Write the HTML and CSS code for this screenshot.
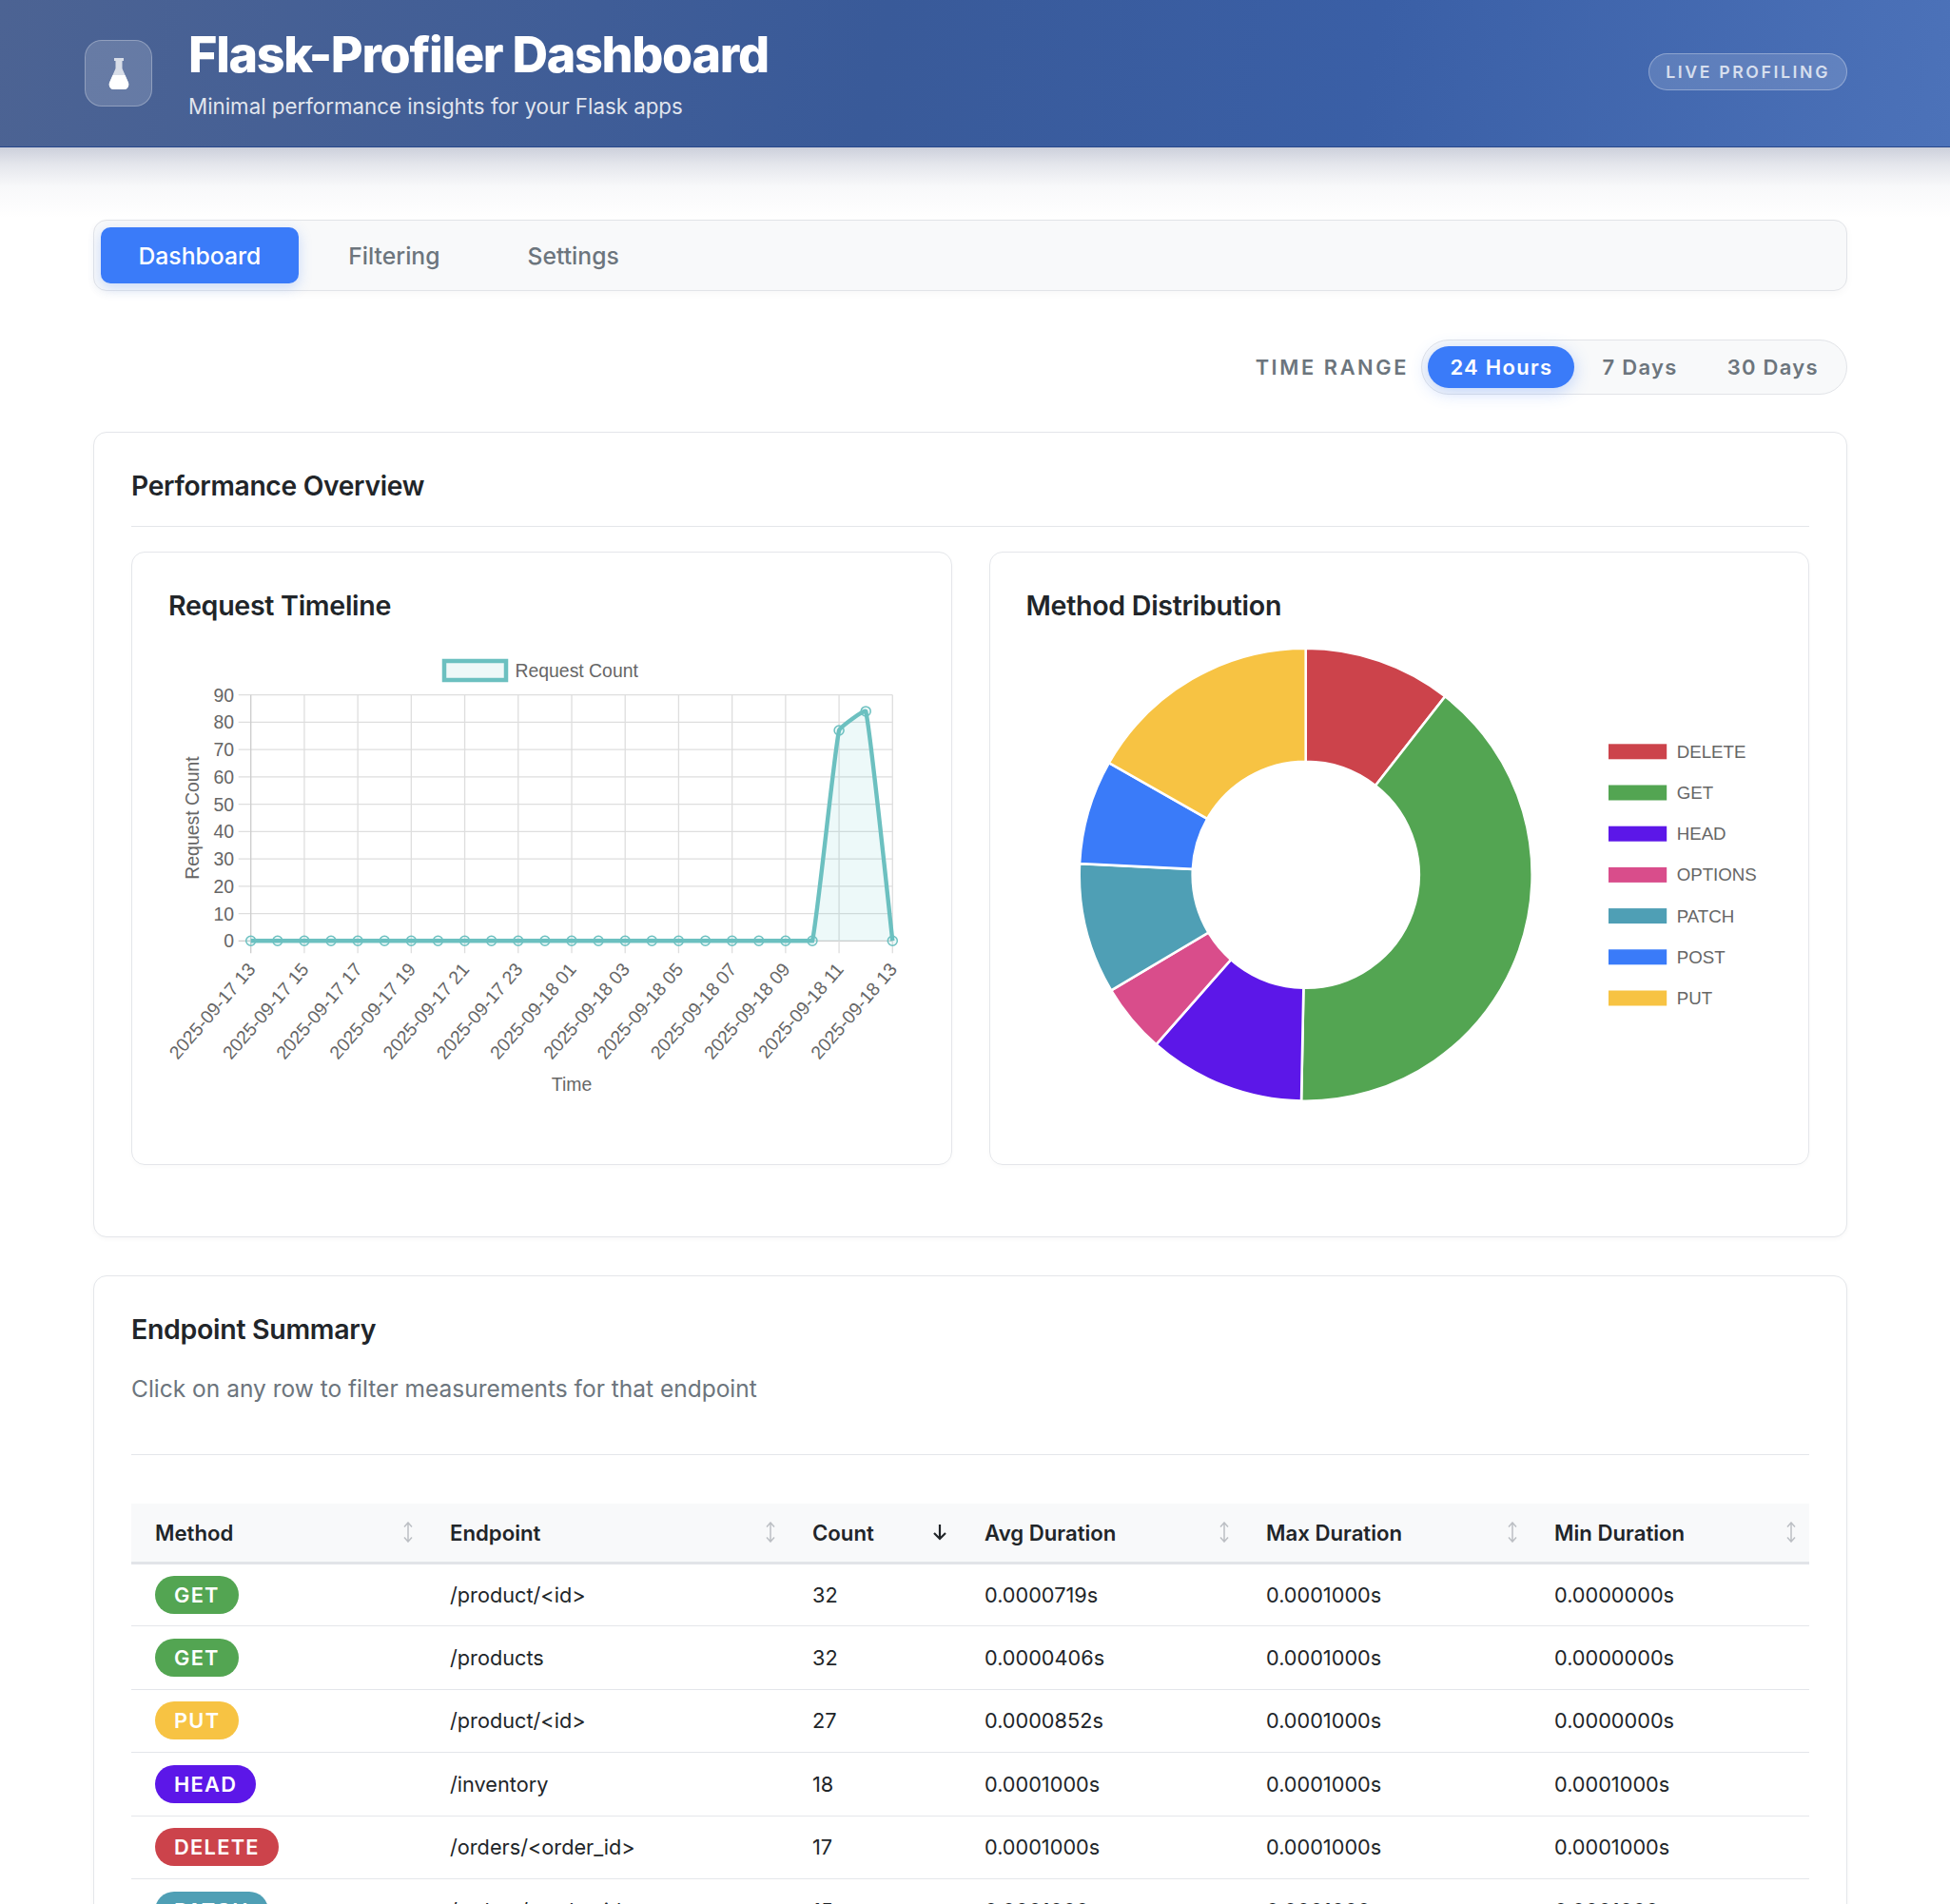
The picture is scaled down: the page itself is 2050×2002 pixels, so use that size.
FILE: index.html
```html
<!DOCTYPE html>
<html lang="en">
<head>
  <meta charset="UTF-8" />
  <title>Flask-Profiler Dashboard</title>
  <link rel="stylesheet" href="styles.css">
</head>
<body>
  <svg class="sprites" width="0" height="0">
    <symbol id="sortBoth" viewBox="0 0 12 22">
      <path d="M6 1v20M2 5.5 6 1l4 4.5M2 16.500 6 21l4-4.500" fill="none" stroke="currentColor" stroke-width="1.5"/>
    </symbol>
    <symbol id="sortDown" viewBox="0 0 14 18">
      <path d="M7 1v15M1 10 7 16l6-6" fill="none" stroke="currentColor" stroke-width="2.2"/>
    </symbol>
  </svg>

  <header class="topbar">
    <div class="brand">
      <div class="brand-icon">
        <svg width="22" height="33" viewBox="0 0 22 33">
          <path d="M6 0h10v3h-1.500v8L21 26c1 3.500-1 7-4.500 7h-11C2 33 0 29.500 1 26l6.500-15V3H6z" fill="#fff" fill-opacity=".75"/>
          <path d="M4.500 18h13L21 26c1 3.500-1 7-4.500 7h-11C2 33 0 29.500 1 26z" fill="#fff"/>
        </svg>
      </div>
      <div>
        <h1>Flask-Profiler Dashboard</h1>
        <p class="tagline">Minimal performance insights for your Flask apps</p>
      </div>
    </div>
    <span class="live-badge">LIVE PROFILING</span>
  </header>

  <main class="content">
    <nav class="tabs">
      <a class="tab active">Dashboard</a>
      <a class="tab">Filtering</a>
      <a class="tab">Settings</a>
    </nav>

    <div class="time-range">
      <span class="time-label">TIME RANGE</span>
      <div class="range-group">
        <button class="range-btn active">24 Hours</button>
        <button class="range-btn">7 Days</button>
        <button class="range-btn">30 Days</button>
      </div>
    </div>

    <section class="card overview">
      <div class="card-head">
        <h2>Performance Overview</h2>
      </div>
      <div class="chart-grid">
        <div class="chart-card">
          <h3>Request Timeline</h3>
          <svg id="timelineChart" class="chart" width="780" height="500" viewBox="0 0 780 500"></svg>
        </div>
        <div class="chart-card">
          <h3>Method Distribution</h3>
          <svg id="methodChart" class="chart" width="780" height="500" viewBox="0 0 780 500"></svg>
        </div>
      </div>
    </section>

    <section class="card">
      <div class="card-head summary-head">
        <h2>Endpoint Summary</h2>
        <p class="hint">Click on any row to filter measurements for that endpoint</p>
      </div>
      <table class="summary">
        <colgroup>
          <col class="col-method"><col class="col-endpoint"><col class="col-count">
          <col class="col-avg"><col class="col-max"><col class="col-min">
        </colgroup>
        <thead>
          <tr>
            <th><div class="th-inner">Method <svg class="sort"><use href="#sortBoth"/></svg></div></th>
            <th><div class="th-inner">Endpoint <svg class="sort"><use href="#sortBoth"/></svg></div></th>
            <th><div class="th-inner">Count <svg class="sort current"><use href="#sortDown"/></svg></div></th>
            <th><div class="th-inner">Avg Duration <svg class="sort"><use href="#sortBoth"/></svg></div></th>
            <th><div class="th-inner">Max Duration <svg class="sort"><use href="#sortBoth"/></svg></div></th>
            <th><div class="th-inner">Min Duration <svg class="sort"><use href="#sortBoth"/></svg></div></th>
          </tr>
        </thead>
        <tbody>
          <tr>
            <td><span class="method get">GET</span></td>
            <td>/product/&lt;id&gt;</td><td>32</td><td>0.0000719s</td><td>0.0001000s</td><td>0.0000000s</td>
          </tr>
          <tr>
            <td><span class="method get">GET</span></td>
            <td>/products</td><td>32</td><td>0.0000406s</td><td>0.0001000s</td><td>0.0000000s</td>
          </tr>
          <tr>
            <td><span class="method put">PUT</span></td>
            <td>/product/&lt;id&gt;</td><td>27</td><td>0.0000852s</td><td>0.0001000s</td><td>0.0000000s</td>
          </tr>
          <tr>
            <td><span class="method head">HEAD</span></td>
            <td>/inventory</td><td>18</td><td>0.0001000s</td><td>0.0001000s</td><td>0.0001000s</td>
          </tr>
          <tr>
            <td><span class="method delete">DELETE</span></td>
            <td>/orders/&lt;order_id&gt;</td><td>17</td><td>0.0001000s</td><td>0.0001000s</td><td>0.0001000s</td>
          </tr>
          <tr>
            <td><span class="method patch">PATCH</span></td>
            <td>/orders/&lt;order_id&gt;</td><td>15</td><td>0.0001000s</td><td>0.0001000s</td><td>0.0001000s</td>
          </tr>
        </tbody>
      </table>
    </section>
  </main>

  <script src="charts.js"></script>
</body>
</html>
```

FILE: styles.css
```css
* {
  box-sizing: border-box;
}
html, body {
  height: 2002px;
  overflow: hidden;
}
body {
  margin: 0;
  background-color: #fff;
  color: #212529;
  font-family: Inter, 'Noto Sans', sans-serif;
  font-size: 21.7px;
}
.sprites {
  position: absolute;
}

.topbar {
  position: relative;
  display: flex;
  align-items: center;
  justify-content: space-between;
  height: 155px;
  padding: 0 108px 0 89px;
  background: linear-gradient(100deg, #4c6393 0%, #395a99 45%, #3a5fa6 70%, #4c72b9 100%);
  border-bottom: 1px solid #2b4f98;
}
/* soft band under the header */
.topbar::after {
  content: "";
  position: absolute;
  top: 100%;
  left: 0;
  right: 0;
  height: 76px;
  background: linear-gradient(rgba(30, 45, 95, 0.23) 0, rgba(30, 45, 95, 0.12) 18px, rgba(30, 45, 95, 0.03) 42px, transparent 100%);
}
.brand {
  display: flex;
  align-items: center;
  gap: 38px;
}
.brand-icon {
  display: flex;
  align-items: center;
  justify-content: center;
  width: 71px;
  height: 70px;
  background-color: rgba(255, 255, 255, 0.16);
  border: 1px solid rgba(255, 255, 255, 0.28);
  border-radius: 18px;
}
h1 {
  margin: 1px 0 0;
  color: #fff;
  font-size: 52px;
  font-weight: 800;
  line-height: 62px;
  letter-spacing: -1.3px;
}
.tagline {
  margin: 7px 0 0;
  color: rgba(255, 255, 255, 0.85);
  font-size: 22.3px;
  line-height: 32px;
}
.live-badge {
  height: 39px;
  margin-bottom: 3px;
  padding: 0 17px;
  line-height: 37px;
  color: rgba(255, 255, 255, 0.75);
  background-color: rgba(255, 255, 255, 0.14);
  border: 1.3px solid rgba(255, 255, 255, 0.3);
  border-radius: 20px;
  font-size: 17.7px;
  font-weight: 600;
  letter-spacing: 2.6px;
}

.content {
  position: relative;
  z-index: 1;
  padding: 76px 108px 0 98px;
}
.tabs {
  display: flex;
  gap: 13px;
  height: 75px;
  padding: 7px;
  background-color: #f8f9fa;
  border: 1.3px solid #e2e4e8;
  border-radius: 14px;
  box-shadow: 0 3px 8px rgba(0, 0, 0, 0.03);
}
.tab {
  display: flex;
  align-items: center;
  padding: 0 39.5px;
  color: #6c757d;
  border-radius: 10px;
  font-size: 24.7px;
  font-weight: 500;
}
.tab.active {
  color: #fff;
  background-color: #3a7bf9;
  box-shadow: 0 4px 14px rgba(58, 123, 249, 0.25);
}

.time-range {
  display: flex;
  align-items: center;
  justify-content: flex-end;
  gap: 13.4px;
  margin-top: 51px;
}
.time-label {
  color: #6c757d;
  font-size: 21.8px;
  font-weight: 600;
  letter-spacing: 2.6px;
}
.range-group {
  display: flex;
  gap: 6px;
  height: 58px;
  padding: 6px;
  background-color: #f8f9fa;
  border: 1.3px solid #e2e4e8;
  border-radius: 29px;
}
.range-btn {
  padding: 0 23px;
  color: #6c757d;
  background: none;
  border: none;
  border-radius: 22px;
  font-family: inherit;
  font-size: 22px;
  font-weight: 600;
  letter-spacing: 1.3px;
}
.range-btn.active {
  color: #fff;
  background-color: #3a7bf9;
  box-shadow: 0 4px 18px rgba(58, 123, 249, 0.3);
}

.card {
  margin-top: 40px;
  padding: 39px;
  background-color: #fff;
  border: 1.3px solid #e4e6ea;
  border-radius: 14px;
  box-shadow: 0 2px 5px rgba(0, 0, 0, 0.03);
}
.overview {
  height: 847px;
  margin-top: 39px;
}
.card-head {
  padding-bottom: 25px;
  border-bottom: 1.3px solid #e4e6ea;
}
h2, h3 {
  margin: 0;
  font-weight: 600;
  line-height: 34px;
  letter-spacing: -0.3px;
}
h2 {
  font-size: 28.2px;
}
h3 {
  font-size: 28.6px;
}
.summary-head {
  padding-bottom: 53px;
}
.summary-head h2 {
  font-size: 28.5px;
}
.hint {
  margin: 29px 0 0;
  color: #6c757d;
  font-size: 24.5px;
  line-height: 32px;
}

.chart-grid {
  display: grid;
  grid-template-columns: 1fr 1fr;
  gap: 39px;
  margin-top: 26px;
}
.chart-card {
  height: 645px;
  padding: 39px 38px;
  border: 1.3px solid #e4e6ea;
  border-radius: 14px;
  box-shadow: 0 2px 5px rgba(0, 0, 0, 0.02);
}
.chart-card h3 {
  margin-bottom: 15.5px;
}
.chart {
  display: block;
  margin-left: -1px;
  overflow: visible;
  font-family: 'Liberation Sans', Arial, sans-serif;
}

.summary {
  width: 100%;
  margin-top: 51px;
  border-collapse: collapse;
  table-layout: fixed;
}
.col-method { width: 310px; }
.col-endpoint { width: 381px; }
.col-count { width: 181px; }
.col-avg { width: 296px; }
.col-max { width: 303px; }
.summary th {
  height: 62px;
  padding: 0 13px 0 25px;
  text-align: left;
  font-size: 22.2px;
  font-weight: 600;
  background-color: #f8f9fa;
  border-bottom: 3px solid #e2e4e8;
}
.th-inner {
  display: flex;
  align-items: center;
  justify-content: space-between;
}
.sort {
  width: 12px;
  height: 22px;
  color: #bcbfc4;
}
.sort.current {
  width: 14px;
  height: 18px;
  margin-right: 2px;
  color: #212529;
}
.summary td {
  height: 66.5px;
  padding: 0 25px;
  border-bottom: 1.3px solid #e4e6ea;
}
.method {
  display: inline-block;
  height: 40px;
  padding: 0 20px;
  color: #fff;
  border-radius: 20px;
  font-size: 21.8px;
  font-weight: 600;
  line-height: 40px;
  letter-spacing: 1.3px;
  vertical-align: middle;
}
.method.get { background-color: #53a552; }
.method.put { background-color: #f7c343; }
.method.head { background-color: #5c17e8; }
.method.delete { background-color: #cc434b; }
.method.patch { background-color: #4f9fb5; }
```

FILE: charts.js
```js
// plot area of the timeline, in svg units
const plot = { left: 87.7, right: 762.3, top: 60.7, bottom: 319.3 };
const lineColor = "#6cc0c0";
const fillColor = "rgba(75,192,192,0.1)";
const gridColor = "#dedede";
const textColor = "#666";
const fontSize = 19.4;

const counts = new Array(25).fill(0);
counts[22] = 77;
counts[23] = 84;

const methods = [
  ["DELETE", 17, "#cc434b"],
  ["GET", 64, "#53a552"],
  ["HEAD", 18, "#5c17e8"],
  ["OPTIONS", 8, "#d94d8b"],
  ["PATCH", 15, "#4f9fb5"],
  ["POST", 12, "#3a7bf9"],
  ["PUT", 27, "#f7c343"]
];

function label(x, y, str, extra = "") {
  return `<text x="${x}" y="${y}" font-size="${fontSize}" fill="${textColor}" dominant-baseline="central" ${extra}>${str}</text>`;
}

function hourLabel(i) {
  const day = i < 11 ? 17 : 18;
  const hour = (13 + i) % 24;
  return `2025-09-${day} ${String(hour).padStart(2, "0")}`;
}

function linePath(points) {
  const tension = 0.1;
  let d = `M${points[0].x} ${points[0].y}`;
  const control = i => {
    const cur = points[i];
    const prev = points[i - 1] || cur;
    const next = points[i + 1] || cur;
    const d01 = Math.hypot(cur.x - prev.x, cur.y - prev.y);
    const d12 = Math.hypot(next.x - cur.x, next.y - cur.y);
    const fa = tension * d01 / (d01 + d12);
    const fb = tension * d12 / (d01 + d12);
    return {
      inX: cur.x - fa * (next.x - prev.x),
      inY: Math.min(cur.y - fa * (next.y - prev.y), plot.bottom),
      outX: cur.x + fb * (next.x - prev.x),
      outY: Math.min(cur.y + fb * (next.y - prev.y), plot.bottom)
    };
  };
  for (let i = 1; i < points.length; i++) {
    const a = control(i - 1);
    const b = control(i);
    d += `C${a.outX} ${a.outY} ${b.inX} ${b.inY} ${points[i].x} ${points[i].y}`;
  }
  return d;
}

function drawTimeline() {
  const stepX = (plot.right - plot.left) / 24;
  const stepY = (plot.bottom - plot.top) / 9;
  let html = "";

  // legend
  html += `<rect x="291" y="25" width="65" height="20" fill="#eff8f8" stroke="${lineColor}" stroke-width="4.5"/>`;
  html += label(365.5, 35, "Request Count");

  // grid and y ticks
  for (let v = 0; v <= 9; v++) {
    const y = plot.bottom - v * stepY;
    const color = v === 0 ? "#ccc" : gridColor;
    html += `<path d="M${plot.left - 13} ${y}H${plot.right}" stroke="${color}" stroke-width="1.3"/>`;
    html += label(70, y, v * 10, 'text-anchor="end"');
  }

  // grid and x ticks, one label every two hours
  for (let i = 0; i <= 24; i += 2) {
    const x = plot.left + i * stepX;
    const color = i === 0 ? "#ccc" : gridColor;
    html += `<path d="M${x} ${plot.top}V${plot.bottom + 13}" stroke="${color}" stroke-width="1.3"/>`;
    html += label(0, 0, hourLabel(i), `text-anchor="end" transform="translate(${x + 0.5} ${plot.bottom + 26}) rotate(-49)"`);
  }

  // axis titles
  html += label(0, 0, "Request Count", `text-anchor="middle" transform="translate(25.7 ${(plot.top + plot.bottom) / 2}) rotate(-90)"`);
  html += label((plot.left + plot.right) / 2, 470, "Time", 'text-anchor="middle"');

  // data
  const points = counts.map((c, i) => ({
    x: plot.left + i * stepX,
    y: plot.bottom - c / 10 * stepY
  }));
  const d = linePath(points);
  html += `<path d="${d}V${plot.bottom}H${plot.left}Z" fill="${fillColor}"/>`;
  html += `<path d="${d}" fill="none" stroke="${lineColor}" stroke-width="4.4"/>`;
  points.forEach(p => {
    html += `<circle cx="${p.x}" cy="${p.y}" r="5" fill="${fillColor}" stroke="${lineColor}" stroke-width="1.5"/>`;
  });

  document.getElementById("timelineChart").innerHTML = html;
}

function drawMethods() {
  const cx = 294.7;
  const cy = 249.7;
  const outer = 238;
  const inner = 119;
  const total = methods.reduce((sum, m) => sum + m[1], 0);
  const polar = (r, a) => `${cx + r * Math.sin(a)} ${cy - r * Math.cos(a)}`;
  let html = "";
  let angle = 0;

  methods.forEach(([name, value, color], i) => {
    const end = angle + value / total * Math.PI * 2;
    const large = end - angle > Math.PI ? 1 : 0;
    html += `<path d="M${polar(outer, angle)}A${outer} ${outer} 0 ${large} 1 ${polar(outer, end)}L${polar(inner, end)}A${inner} ${inner} 0 ${large} 0 ${polar(inner, angle)}Z" fill="${color}" stroke="#fff" stroke-width="2.6"/>`;
    angle = end;

    const y = 120.3 + i * 43.2;
    html += `<rect x="613" y="${y - 8}" width="61.200" height="16" fill="${color}"/>`;
    html += label(684.7, y, name, 'style="font-size:18.7px"');
  });

  document.getElementById("methodChart").innerHTML = html;
}

drawTimeline();
drawMethods();
```
